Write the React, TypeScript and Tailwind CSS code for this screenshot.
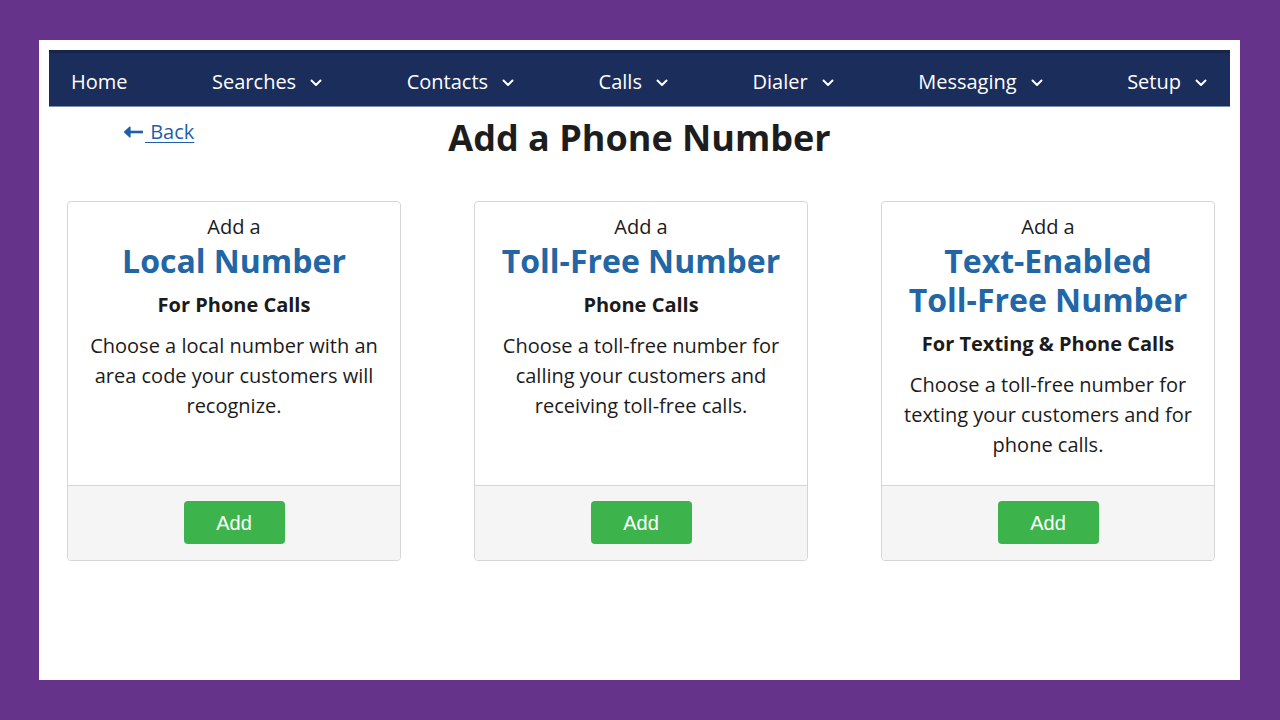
const NAV = [
  { label: "Home", menu: false },
  { label: "Searches", menu: true },
  { label: "Contacts", menu: true },
  { label: "Calls", menu: true },
  { label: "Dialer", menu: true },
  { label: "Messaging", menu: true },
  { label: "Setup", menu: true },
];

const CARDS = [
  {
    title: ["Local Number"],
    sub: "For Phone Calls",
    desc: "Choose a local number with an area code your customers will recognize.",
  },
  {
    title: ["Toll-Free Number"],
    sub: "Phone Calls",
    desc: "Choose a toll-free number for calling your customers and receiving toll-free calls.",
  },
  {
    title: ["Text-Enabled", "Toll-Free Number"],
    sub: "For Texting & Phone Calls",
    desc: "Choose a toll-free number for texting your customers and for phone calls.",
  },
];

function Chevron() {
  return (
    <svg width="12" height="8" viewBox="0 0 12 8" className="ml-[14px] mt-[2px]">
      <path d="M1.5 1.5 L6 6 L10.5 1.5" fill="none" stroke="white" strokeWidth="2" strokeLinecap="round" strokeLinejoin="round" />
    </svg>
  );
}

// long left arrow like the icon font one
function BackArrow() {
  return (
    <svg width="21" height="12" viewBox="0 0 21 12" className="mr-[1px]">
      <path d="M20 6 H4" stroke="#1f5fa8" strokeWidth="2.6" />
      <path d="M7 1 L1.5 6 L7 11 Z" fill="#1f5fa8" stroke="#1f5fa8" strokeWidth="1.2" strokeLinejoin="round" />
    </svg>
  );
}

function NumberCard({ title, sub, desc }: { title: string[]; sub: string; desc: string }) {
  return (
    <div className="flex flex-col rounded-[4px] border border-[#d6d6d6] bg-white overflow-hidden">
      <div className="flex-1 flex flex-col items-center text-center px-4 pt-[11px] pb-[25px]">
        <div className="text-[20px] leading-[28px] text-[#1b1b1b]">Add a</div>
        <div className="text-[32px] leading-[39px] font-bold text-[#2266a6]">
          {title.map((t) => (
            <div key={t}>{t}</div>
          ))}
        </div>
        <div className="mt-[11px] text-[20px] leading-[28px] font-bold text-[#1b1b1b]">{sub}</div>
        <p className="mt-[12px] text-[20px] leading-[30px] text-[#1b1b1b]">{desc}</p>
      </div>
      <div className="flex justify-center border-t border-[#d6d6d6] bg-[#f5f5f5] pt-[15px] pb-[16px]">
        <button
          type="button"
          className="w-[101px] h-[43px] rounded-[4px] bg-[#3cb44b] text-white text-[20px] font-['Liberation_Sans',Arial,sans-serif]"
        >
          Add
        </button>
      </div>
    </div>
  );
}

export default function App() {
  return (
    <div className="min-h-screen w-full bg-[#65338a] p-[40px_40px_40px_39px] font-['Open_Sans',sans-serif]">
      <div className="h-[640px] bg-white px-[10px] pt-[10px]">
        <nav className="flex items-center justify-between h-[57px] pt-[5px] bg-[#1b2d5a] border-t-[3px] border-t-[#15244b] border-b border-b-[#7f8fae] pl-[22px] pr-[23px] text-white text-[20px]">
          {NAV.map((n) => (
            <div key={n.label} className="flex items-center">
              <span>{n.label}</span>
              {n.menu && <Chevron />}
            </div>
          ))}
        </nav>

        <div className="grid grid-cols-[1fr_auto_1fr] items-start pt-[8px]">
          <div className="pl-[74px] pt-[3px]">
            <a href="#" className="inline-flex items-center text-[20px] leading-[28px] text-[#1f5fa8]">
              <BackArrow />
              <span className="underline underline-offset-[3px] decoration-1">&nbsp;Back</span>
            </a>
          </div>
          <h1 className="text-[36px] leading-[46px] font-bold text-[#1d1d1d]">Add a Phone Number</h1>
          <div />
        </div>

        <div className="grid grid-cols-3 gap-[73px] pl-[18px] pr-[15px] mt-[40px]">
          {CARDS.map((c) => (
            <NumberCard key={c.sub} {...c} />
          ))}
        </div>
      </div>
    </div>
  );
}
